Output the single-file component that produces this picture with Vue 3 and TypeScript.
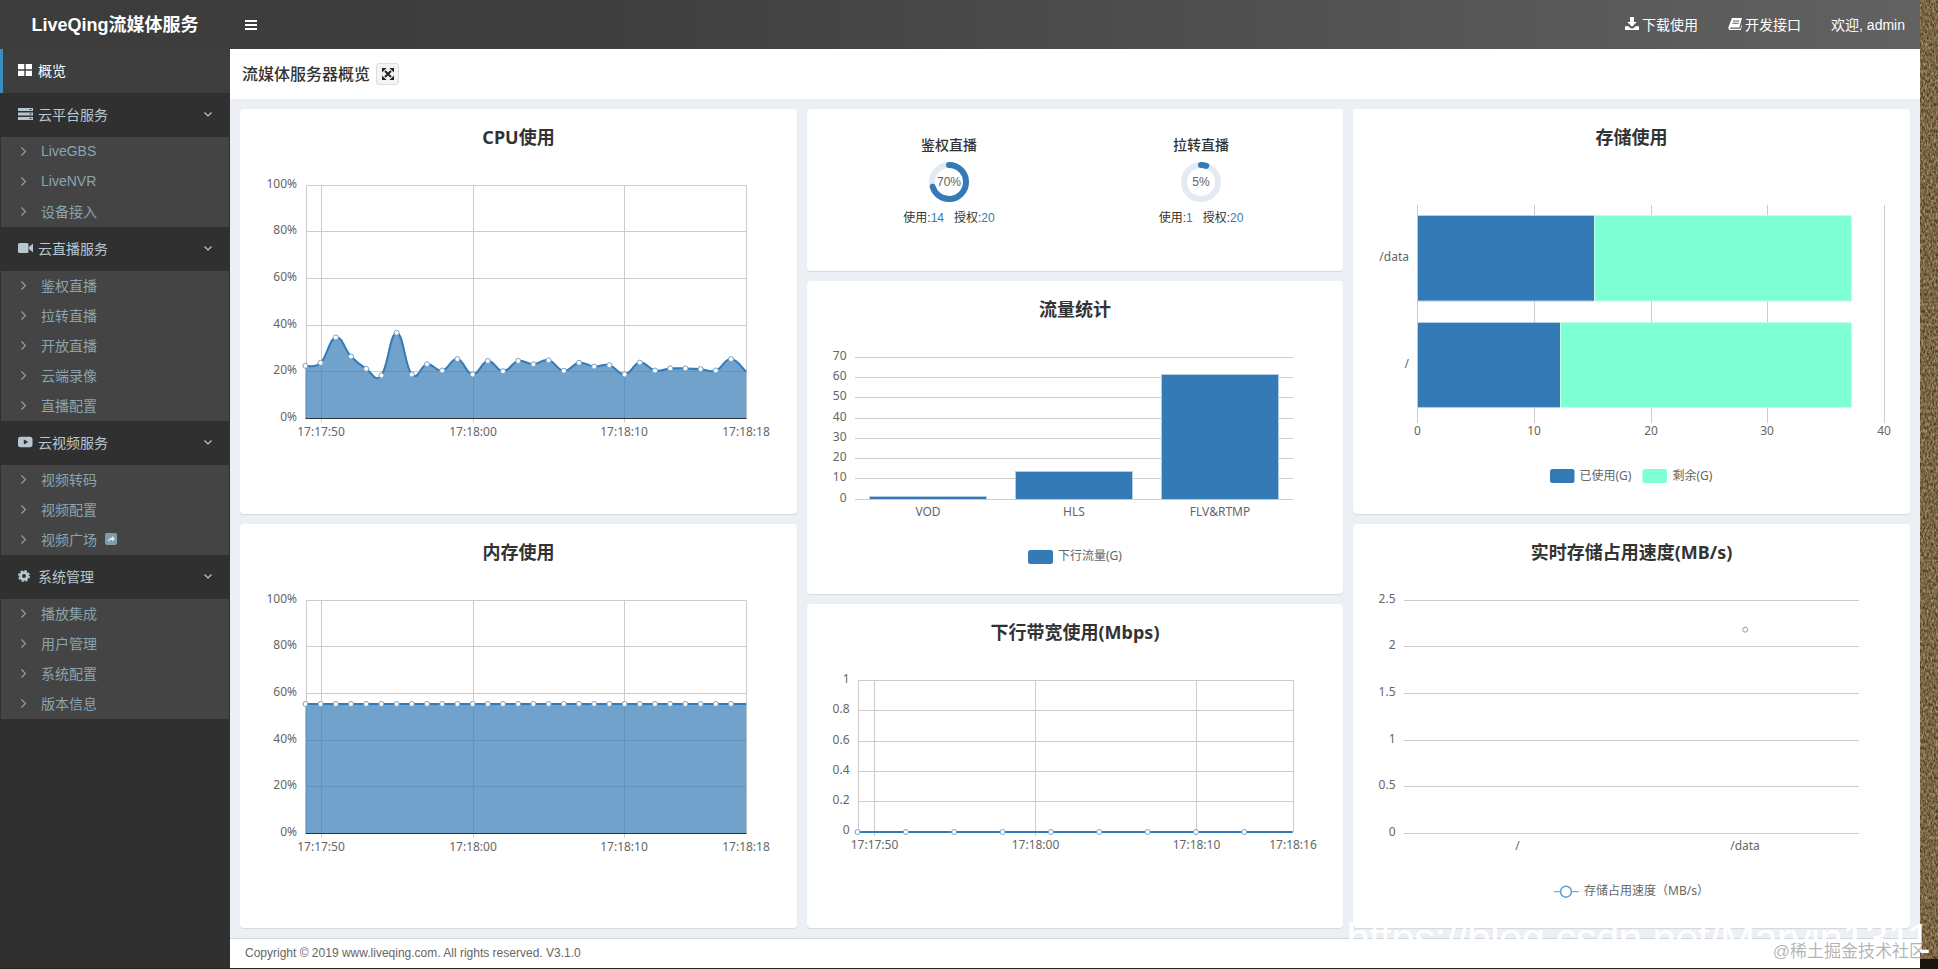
<template>
  <div class="page">
    <div class="window">
      <header class="topbar">
        <div class="logo">LiveQing流媒体服务</div>
        <svg class="burger" width="12" height="10" viewBox="0 0 12 10"><path d="M0 0h12v2H0zM0 4h12v2H0zM0 8h12v2H0z" /></svg>
        <nav class="topnav">
          <a>
            <svg width="14" height="13" viewBox="0 0 14 13"><path d="M5 0h4v5h2.800L7 9.800 2.200 5H5zM0 9.200h3.500L6 11.600h2l2.500-2.400H14V13H0z" /></svg>
            下载使用
          </a>
          <a>
            <svg width="14" height="12" viewBox="0 0 14 12"><path d="M4 0h10l-2.600 9.400H2.800c-1 0-1.200 1.300 0 1.300h9.600l1-3.700.6.500L12.800 12H2.500C.8 12 0 10.800.4 9.200zM5 2.600v1h6.200v-1zM4.500 4.800v1h6.200v-1z" fill-rule="evenodd" /></svg>
            开发接口
          </a>
          <a class="welcome">欢迎, admin</a>
        </nav>
      </header>

      <div class="body">
        <aside class="sidebar">
          <div class="overview">
            <svg width="14" height="12" viewBox="0 0 14 12"><path d="M0 0h6.300v5.300H0zM7.700 0H14v5.300H7.700zM0 6.700h6.300V12H0zM7.700 6.700H14V12H7.700z" /></svg>
            <span>概览</span>
          </div>
          <template v-for="group in menu" :key="group.name">
            <div class="group">
              <svg v-if="group.icon === 'server'" width="15" height="12" viewBox="0 0 15 12"><path d="M0 0h15v3H0zM0 4.500h15v3H0zM0 9h15v3H0z" /><path class="hole" d="M11.500 1h2v1h-2zM11.500 5.500h2v1h-2zM11.500 10h2v1h-2z" /></svg>
              <svg v-else-if="group.icon === 'video'" width="15" height="12" viewBox="0 0 15 12"><rect x="0" y="1" width="10.500" height="10" rx="1.600" /><path d="M11 5l4-3.500v9L11 7z" /></svg>
              <svg v-else-if="group.icon === 'play'" width="15" height="12" viewBox="0 0 15 12"><rect x="0" y=".8" width="14.500" height="10.400" rx="2.600" /><path class="hole" d="M5.800 3.400l4.400 2.600-4.400 2.600z" /></svg>
              <svg v-else width="15" height="12" viewBox="0 0 15 12"><circle cx="6" cy="6" r="3.400" fill="none" stroke-width="2.800" class="gear" /><circle cx="6" cy="6" r="5.200" fill="none" stroke-width="1.600" stroke-dasharray="2.300 1.780" class="gear" /></svg>
              <span class="group-name">{{ group.name }}</span>
              <svg class="angle" width="8" height="5" viewBox="0 0 8 5"><path d="M.5.500L4 4 7.500.500" /></svg>
            </div>
            <ul class="sub">
              <li v-for="item in group.items" :key="item">
                <svg class="angle-right" width="5" height="9" viewBox="0 0 5 9"><path d="M.5.500l4 4-4 4" /></svg>
                <span class="sub-name">{{ item }}</span>
                <svg v-if="item === '视频广场'" class="share" width="12" height="12" viewBox="0 0 12 12"><rect width="12" height="12" rx="2" fill="#7f9cab" /><path d="M3 9.500c0-3 1.500-4.700 4-4.700V3l3 2.800-3 2.800V6.700c-1.700 0-3.200.7-4 2.800z" fill="#e4ebee" /></svg>
              </li>
            </ul>
          </template>
        </aside>

        <main class="main">
          <div class="crumb">
            <h1>流媒体服务器概览</h1>
            <button class="fullscreen">
              <svg width="12" height="12" viewBox="0 0 12 12">
                <path d="M3 3l6 6M9 3l-6 6" stroke="#222" stroke-width="2" fill="none" />
                <path d="M0 0h4.600L0 4.600zM12 0v4.600L7.400 0zM0 12V7.400L4.600 12zM12 12H7.400L12 7.400z" fill="#222" />
              </svg>
            </button>
          </div>

          <div class="dash">
            <div v-for="(col, c) in columns" :key="c" class="col" :class="{ narrow: c === 1 }">
              <section v-for="card in col" :key="card.title" class="card" :style="{ height: card.height + 'px' }">
                <div v-if="card.rings" class="rings">
                  <div v-for="ring in card.rings" :key="ring.name" class="ring-col">
                    <div class="ring-name">{{ ring.name }}</div>
                    <svg class="ring" width="40" height="40" viewBox="0 0 40 40">
                      <circle cx="20" cy="20" r="17" class="ring-track" />
                      <circle cx="20" cy="20" r="17" class="ring-value" :stroke-dasharray="ringDash(ring.used, ring.total)" transform="rotate(-90 20 20)" />
                      <text x="20" y="24" text-anchor="middle">{{ Math.round(ring.used / ring.total * 100) }}%</text>
                    </svg>
                    <div class="ring-info">
                      <span>使用:<b>{{ ring.used }}</b></span>
                      <span>授权:<b>{{ ring.total }}</b></span>
                    </div>
                  </div>
                </div>

                <template v-else>
                  <h2>{{ card.title }}</h2>
                  <svg class="chart" :width="card.width" :height="card.height - 58" :viewBox="`${card.left} ${card.top + 58} ${card.width} ${card.height - 58}`">
                    <line v-for="(g, i) in card.grid" :key="'g' + i" class="grid" :x1="g.x1" :y1="g.y1" :x2="g.x2" :y2="g.y2" />
                    <path v-if="card.area" class="area" :d="card.area" />
                    <rect v-for="(b, i) in card.bars" :key="'b' + i" class="bar" :x="b.x" :y="b.y" :width="b.w" :height="b.h" :fill="b.fill" :stroke="b.stroke" />
                    <line v-if="card.axis" class="axis" :x1="card.axis.x1" :y1="card.axis.y1" :x2="card.axis.x2" :y2="card.axis.y2" />
                    <path v-if="card.line" class="curve" :d="card.line" />
                    <circle v-for="(d, i) in card.dots" :key="'d' + i" class="dot" :cx="d.x" :cy="d.y" r="2.500" />
                    <text v-for="t in card.texts" :key="t.t + t.x + t.y" :x="t.x" :y="t.y" :text-anchor="t.anchor">{{ t.t }}</text>
                    <rect v-for="(l, i) in card.legend" :key="'l' + i" :x="l.x" :y="l.y" :width="l.w" :height="l.h" :fill="l.fill" rx="2.500" />
                    <g v-if="card.lineLegend">
                      <line class="legend-line" :x1="card.lineLegend.x - 12" :y1="card.lineLegend.y" :x2="card.lineLegend.x + 13" :y2="card.lineLegend.y" />
                      <circle class="legend-dot" :cx="card.lineLegend.x" :cy="card.lineLegend.y" r="5.500" />
                    </g>
                  </svg>
                </template>
              </section>
            </div>
          </div>

          <footer class="foot">Copyright © 2019 www.liveqing.com. All rights reserved. V3.1.0</footer>
        </main>
      </div>
      <div class="edge"></div>
    </div>

    <div class="wall">
      <svg width="18" height="969">
        <filter id="grain"><feTurbulence type="fractalNoise" baseFrequency="0.55 0.3" numOctaves="3" seed="7" /><feColorMatrix values="0 0 0 0 .9  0 0 0 0 .72  0 0 0 0 .4  .9 0 0 0 -.15" /></filter>
        <rect width="18" height="969" fill="#46331a" />
        <rect width="18" height="969" filter="url(#grain)" />
        <rect y="959" width="18" height="10" fill="#19140f" />
      </svg>
    </div>

    <div class="mark-csdn">https://blog.csdn.net/Marvin1311</div>
    <div class="mark-juejin">@稀土掘金技术社区</div>
  </div>
</template>

<script setup lang="ts">
interface Pt { x: number; y: number }
interface Seg { x1: number; y1: number; x2: number; y2: number }
interface Txt { x: number; y: number; t: string; anchor?: 'start' | 'middle' | 'end' }
interface Box { x: number; y: number; w: number; h: number; fill: string; stroke?: string }
interface Ring { name: string; used: number; total: number }
interface Card {
  title: string
  height: number
  left: number
  top: number
  width: number
  grid?: Seg[]
  texts?: Txt[]
  area?: string
  line?: string
  axis?: Seg
  dots?: Pt[]
  bars?: Box[]
  legend?: Box[]
  lineLegend?: Pt
  rings?: Ring[]
}

const BLUE = '#337ab7'
const GREEN = '#7fffd4'

const menu = [
  { name: '云平台服务', icon: 'server', items: ['LiveGBS', 'LiveNVR', '设备接入'] },
  { name: '云直播服务', icon: 'video', items: ['鉴权直播', '拉转直播', '开放直播', '云端录像', '直播配置'] },
  { name: '云视频服务', icon: 'play', items: ['视频转码', '视频配置', '视频广场'] },
  { name: '系统管理', icon: 'gear', items: ['播放集成', '用户管理', '系统配置', '版本信息'] },
]

const cpu = [22.6, 23.9, 34.8, 26.6, 21.3, 18.5, 36.8, 18.9, 23.3, 20.6, 25.5, 18.9, 24.7, 20.3, 24.7, 23.3, 25, 20.5, 23.9, 22.3, 22.9, 18.9, 24, 20.6, 21.5, 21.5, 21.2, 20.6, 25.5, 20]
const mem = new Array(30).fill(55.6) as number[]

function hLines(x1: number, x2: number, ys: number[]): Seg[] {
  return ys.map((y) => ({ x1, y1: y, x2, y2: y }))
}

function vLines(y1: number, y2: number, xs: number[]): Seg[] {
  return xs.map((x) => ({ x1: x, y1, x2: x, y2 }))
}

function smooth(p: Pt[]): string {
  let d = `M${p[0].x} ${p[0].y}`
  for (let i = 0; i < p.length - 1; i++) {
    const a = p[i - 1] ?? p[i]
    const b = p[i]
    const c = p[i + 1]
    const e = p[i + 2] ?? c
    const k = 0.22
    d += `C${b.x + (c.x - a.x) * k} ${b.y + (c.y - a.y) * k} ${c.x - (e.x - b.x) * k} ${c.y - (e.y - b.y) * k} ${c.x} ${c.y}`
  }
  return d
}

function percentCard(title: string, top: number, height: number, values: number[]): Card {
  const t = top === 109 ? 185.5 : 600.5
  const ys = [0, 46, 93, 140, 186, 233].map((n) => t + n)
  const bottom = ys[5]
  const pts = values.map((v, i) => ({ x: 305.4 + i * 15.2, y: bottom - v * 2.33 }))
  const last = pts[pts.length - 1]
  return {
    title, top, height, left: 240, width: 557,
    grid: [...hLines(306.5, 746.5, ys), ...vLines(t, bottom, [306.5, 746.5]), ...vLines(t, bottom + 4, [321.5, 473.5, 624.5])],
    area: `${smooth(pts)}L${last.x} ${bottom}L${pts[0].x} ${bottom}Z`,
    line: smooth(pts),
    axis: { x1: 305.5, y1: bottom, x2: 746.5, y2: bottom },
    dots: pts.slice(0, -1),
    texts: [
      ...['100%', '80%', '60%', '40%', '20%', '0%'].map((s, i) => ({ x: 297, y: ys[i] + 2, t: s, anchor: 'end' as const })),
      ...([[321, '17:17:50'], [473, '17:18:00'], [624, '17:18:10'], [746, '17:18:18']] as [number, string][]).map(([x, s]) => ({ x, y: bottom + 17, t: s, anchor: 'middle' as const })),
    ],
  }
}

const bandYs = [680.5, 710.5, 741.5, 771.5, 801.5, 832]
const bandPts = Array.from({ length: 10 }, (_, i) => ({ x: 857.5 + i * 48.35, y: 832 }))

const trafficYs = [357.5, 377.5, 397.5, 418.5, 438.5, 458.5, 478.5, 499.5]
const speedYs = [600.5, 646.5, 693.5, 740.5, 786.5, 833.5]
const barStroke = '#b3cde3'
const greenStroke = '#c5ffea'

const columns: Card[][] = [
  [
    percentCard('CPU使用', 109, 405, cpu),
    percentCard('内存使用', 524, 404, mem),
  ],
  [
    {
      title: 'rings', top: 109, height: 162, left: 807, width: 536,
      rings: [
        { name: '鉴权直播', used: 14, total: 20 },
        { name: '拉转直播', used: 1, total: 20 },
      ],
    },
    {
      title: '流量统计', top: 281, height: 313, left: 807, width: 536,
      grid: hLines(855, 1293, trafficYs),
      bars: [
        { x: 869.5, y: 496.5, w: 117, h: 3, fill: BLUE, stroke: barStroke },
        { x: 1015.5, y: 471.5, w: 117, h: 28, fill: BLUE, stroke: barStroke },
        { x: 1161.5, y: 374.5, w: 117, h: 125, fill: BLUE, stroke: barStroke },
      ],
      legend: [{ x: 1028, y: 550, w: 25, h: 14, fill: BLUE }],
      texts: [
        ...['70', '60', '50', '40', '30', '20', '10', '0'].map((s, i) => ({ x: 846.5, y: trafficYs[i] + 2.5, t: s, anchor: 'end' as const })),
        { x: 928, y: 516, t: 'VOD', anchor: 'middle' },
        { x: 1074, y: 516, t: 'HLS', anchor: 'middle' },
        { x: 1220, y: 516, t: 'FLV&RTMP', anchor: 'middle' },
        { x: 1058, y: 560, t: '下行流量(G)' },
      ],
    },
    {
      title: '下行带宽使用(Mbps)', top: 604, height: 324, left: 807, width: 536,
      grid: [...hLines(858.5, 1293.5, bandYs), ...vLines(680.5, 832, [858.5, 1293.5]), ...vLines(680.5, 836, [874.5, 1035.5, 1196.5])],
      line: `M${bandPts[0].x} 832L${bandPts[9].x} 832`,
      dots: bandPts.slice(0, -1),
      texts: [
        ...['1', '0.8', '0.6', '0.4', '0.2', '0'].map((s, i) => ({ x: 849.5, y: bandYs[i] + 2, t: s, anchor: 'end' as const })),
        ...([[874.5, '17:17:50'], [1035.5, '17:18:00'], [1196.5, '17:18:10'], [1293, '17:18:16']] as [number, string][]).map(([x, s]) => ({ x, y: 849, t: s, anchor: 'middle' as const })),
      ],
    },
  ],
  [
    {
      title: '存储使用', top: 109, height: 405, left: 1353, width: 557,
      grid: vLines(205, 423, [1417.5, 1534.5, 1651.5, 1767.5, 1884.5]),
      bars: [
        { x: 1417.5, y: 215.5, w: 177, h: 85.5, fill: BLUE, stroke: barStroke },
        { x: 1594.5, y: 215.5, w: 257, h: 85.5, fill: GREEN, stroke: greenStroke },
        { x: 1417.5, y: 322.5, w: 143, h: 85, fill: BLUE, stroke: barStroke },
        { x: 1560.5, y: 322.5, w: 291, h: 85, fill: GREEN, stroke: greenStroke },
      ],
      legend: [
        { x: 1550, y: 469, w: 24.5, h: 14, fill: BLUE },
        { x: 1642.5, y: 469, w: 24.5, h: 14, fill: GREEN },
      ],
      texts: [
        { x: 1409, y: 261, t: '/data', anchor: 'end' },
        { x: 1409, y: 368, t: '/', anchor: 'end' },
        ...[['0', 1417.5], ['10', 1534], ['20', 1651], ['30', 1767], ['40', 1884]].map(([s, x]) => ({ x: x as number, y: 435, t: s as string, anchor: 'middle' as const })),
        { x: 1579.5, y: 480, t: '已使用(G)' },
        { x: 1672.5, y: 480, t: '剩余(G)' },
      ],
    },
    {
      title: '实时存储占用速度(MB/s)', top: 524, height: 404, left: 1353, width: 557,
      grid: hLines(1404, 1859, speedYs),
      dots: [{ x: 1745.2, y: 629.7 }],
      lineLegend: { x: 1566, y: 891.7 },
      texts: [
        ...['2.5', '2', '1.5', '1', '0.5', '0'].map((s, i) => ({ x: 1395.5, y: speedYs[i] + 2, t: s, anchor: 'end' as const })),
        { x: 1517.5, y: 850, t: '/', anchor: 'middle' },
        { x: 1745, y: 850, t: '/data', anchor: 'middle' },
        { x: 1584, y: 895, t: '存储占用速度（MB/s）' },
      ],
    },
  ],
]

function ringDash(used: number, total: number): string {
  const len = 2 * Math.PI * 17
  return `${(used / total) * len} ${len}`
}
</script>

<style scoped>
.page {
  position: relative;
  display: flex;
  width: 1938px;
  height: 969px;
  overflow: hidden;
  font-family: "Liberation Sans", "Noto Sans CJK SC", sans-serif;
  font-size: 14px;
  color: #333;
}

.window {
  display: flex;
  flex-direction: column;
  width: 1920px;
  height: 969px;
}

.wall {
  flex: 1;
  line-height: 0;
}

.edge {
  height: 1px;
  background: #1c2a12;
}

.topbar {
  display: flex;
  align-items: center;
  flex: 0 0 49px;
  background: linear-gradient(90deg, #3c3c3c 0%, #3e3e3e 30%, #626262 100%);
  color: #fff;
}

.logo {
  width: 230px;
  padding-bottom: 4px;
  font-size: 18px;
  font-weight: 700;
  text-align: center;
}

.burger {
  margin-left: 15px;
  fill: #fff;
}

.topnav {
  display: flex;
  margin-left: auto;
}

.topnav a {
  display: flex;
  align-items: center;
  gap: 3px;
  padding: 0 15px 2px;
}

.topnav svg {
  fill: #fff;
}

.body {
  display: flex;
  flex: 1;
  min-height: 0;
}

.sidebar {
  flex: 0 0 230px;
  background: #303030;
}

.overview,
.group {
  display: flex;
  align-items: center;
  box-sizing: border-box;
  height: 44px;
  padding: 0 0 2px 18px;
}

.overview {
  background: #3e3e3e;
  box-shadow: inset 3px 0 0 #3c8dbc;
  color: #fff;
}

.overview svg {
  margin-right: 6px;
  fill: #fff;
}

.group {
  color: #b8c7ce;
}

.group > svg:first-child {
  margin-right: 5px;
  fill: #b8c7ce;
}

.hole {
  fill: #303030;
}

.gear {
  stroke: #b8c7ce;
}

.group-name {
  flex: 1;
}

.angle {
  margin-right: 18px;
  fill: none;
  stroke: #b8c7ce;
  stroke-width: 1.2;
}

.sub {
  margin: 0 1px;
  padding: 0;
  list-style: none;
  background: #444;
  color: #8aa4af;
}

.sub li {
  display: flex;
  align-items: center;
  box-sizing: border-box;
  height: 30px;
  padding: 0 0 2px 20px;
}

.angle-right {
  margin-right: 15px;
  fill: none;
  stroke: #8aa4af;
  stroke-width: 1.2;
}

.share {
  margin-left: 8px;
}

.main {
  display: flex;
  flex: 1;
  flex-direction: column;
  min-width: 0;
  background: #ecf0f5;
}

.crumb {
  display: flex;
  align-items: center;
  flex: 0 0 50px;
  padding-left: 12px;
  background: #fff;
}

.crumb h1 {
  margin: 0;
  padding-bottom: 2px;
  font-size: 16px;
  font-weight: 500;
  color: #333;
}

.fullscreen {
  display: flex;
  align-items: center;
  justify-content: center;
  box-sizing: border-box;
  width: 23px;
  height: 22px;
  margin-left: 6px;
  padding: 0;
  border: 1px solid #ddd;
  border-radius: 3px;
  background: #f4f4f4;
}

.dash {
  display: flex;
  flex: 1;
  min-height: 0;
  gap: 10px;
  padding: 10px;
}

.col {
  display: flex;
  flex-direction: column;
  flex: 0 0 557px;
  gap: 10px;
}

.col.narrow {
  flex-basis: 536px;
}

.card {
  overflow: hidden;
  border-radius: 4px;
  background: #fff;
  box-shadow: 0 1px 1px rgba(0, 0, 0, 0.1);
}

.card h2 {
  height: 58px;
  margin: 0;
  font-family: "Noto Sans", "Noto Sans CJK SC", sans-serif;
  font-size: 18px;
  font-weight: 700;
  line-height: 56px;
  text-align: center;
  color: #333;
}

.chart {
  display: block;
  font-family: "Noto Sans", "Noto Sans CJK SC", sans-serif;
  font-size: 12px;
  fill: #666;
}

.grid {
  stroke: #ccc;
  stroke-width: 1;
}

.area {
  fill: #337ab7;
  fill-opacity: 0.7;
  stroke: none;
}

.axis {
  stroke: #333;
  stroke-width: 1;
}

.curve {
  fill: none;
  stroke: #337ab7;
  stroke-width: 2;
}

.dot {
  fill: #fff;
  stroke: #6fa3d0;
  stroke-width: 1;
}

.bar {
  stroke-width: 1;
}

.legend-line {
  stroke: #5b9bd5;
  stroke-width: 1;
}

.legend-dot {
  fill: #fff;
  stroke: #5b9bd5;
  stroke-width: 1.5;
}

.rings {
  display: flex;
  padding: 0 16px;
}

.ring-col {
  display: flex;
  flex: 1;
  flex-direction: column;
  align-items: center;
  padding-top: 26px;
}

.ring-name {
  font-size: 14px;
  font-weight: 500;
  line-height: 20px;
  color: #333;
}

.ring {
  margin-top: 7px;
  font-size: 12px;
}

.ring text {
  fill: #606266;
}

.ring-track,
.ring-value {
  fill: none;
  stroke-width: 6;
}

.ring-track {
  stroke: #e5e9f2;
}

.ring-value {
  stroke: #337ab7;
  stroke-linecap: round;
}

.ring-info {
  display: flex;
  gap: 10px;
  margin-top: 7px;
  font-size: 12px;
  line-height: 18px;
}

.ring-info b {
  font-weight: 400;
  color: #337ab7;
}

.foot {
  box-sizing: border-box;
  flex: 0 0 30px;
  padding-left: 15px;
  border-top: 1px solid #d2d6de;
  background: #fff;
  font-size: 12px;
  line-height: 29px;
  color: #666;
}

.mark-csdn {
  position: absolute;
  right: 8px;
  top: 916px;
  font-size: 42px;
  line-height: 46px;
  letter-spacing: -0.64px;
  white-space: nowrap;
  color: #fff;
  pointer-events: none;
}

.mark-juejin {
  position: absolute;
  right: 12px;
  top: 941px;
  font-size: 17px;
  line-height: 22px;
  white-space: nowrap;
  color: rgba(130, 130, 130, 0.6);
  pointer-events: none;
}
</style>

<style>
html,
body {
  margin: 0;
  overflow: hidden;
  background: #fff;
}
</style>
